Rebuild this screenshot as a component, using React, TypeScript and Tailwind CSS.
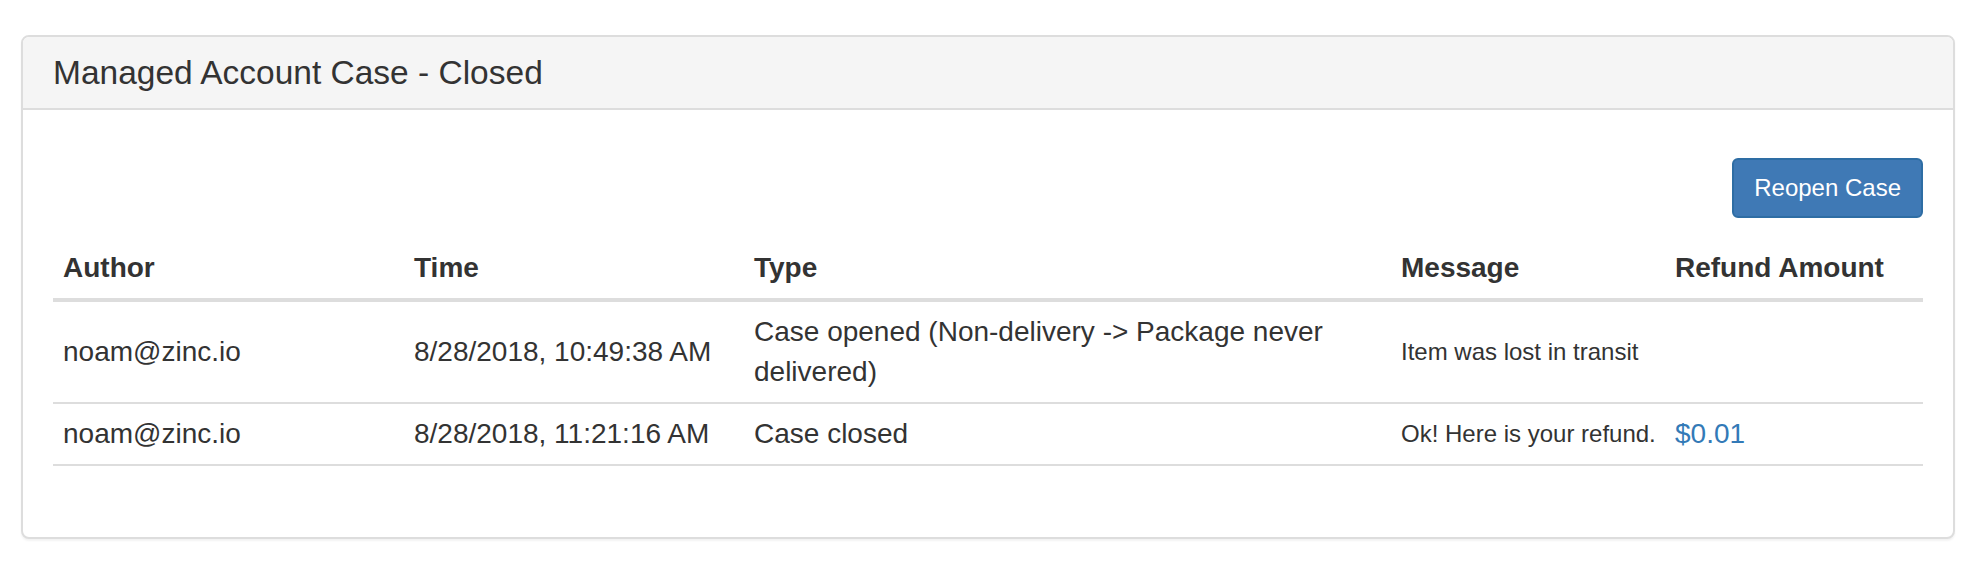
import React from 'react';

type Entry = {
    author: string;
    time: string;
    type: string;
    message: string;
    refund?: string;
};

const entries: Entry[] = [
    {
        author: 'noam@zinc.io',
        time: '8/28/2018, 10:49:38 AM',
        type: 'Case opened (Non-delivery -> Package never delivered)',
        message: 'Item was lost in transit',
    },
    {
        author: 'noam@zinc.io',
        time: '8/28/2018, 11:21:16 AM',
        type: 'Case closed',
        message: 'Ok! Here is your refund.',
        refund: '$0.01',
    },
];

export default function App() {
    return (
        <div className="min-h-screen bg-white pt-[35px] pl-[21px] pr-[21px] text-[#333] font-['Liberation_Sans',Arial,sans-serif]">
            <div className="w-[1934px] rounded-[8px] border-2 border-[#ddd] bg-white shadow-[0_2px_2px_rgba(0,0,0,0.05)]">
                <div className="rounded-t-[6px] border-b-2 border-[#ddd] bg-[#f5f5f5] px-[30px] py-[18px]">
                    <h3 className="text-[33.5px] leading-[35px] font-normal">Managed Account Case - Closed</h3>
                </div>
                <div className="px-[30px] pt-[30px] pb-[30px]">
                    <div className="mt-[18px] flex justify-end">
                        <button className="h-[60px] rounded-[6px] border-2 border-[#2e6da4] bg-[#3f79b5] px-[20px] text-[24px] leading-[36px] text-white">
                            Reopen Case
                        </button>
                    </div>
                    <table className="mt-[20px] mb-[41px] w-full table-fixed border-collapse text-[28px] leading-[40px]">
                        <thead>
                            <tr className="border-b-4 border-[#ddd]">
                                <th className="w-[351px] p-[10px] text-left align-bottom font-bold">Author</th>
                                <th className="w-[340px] p-[10px] text-left align-bottom font-bold">Time</th>
                                <th className="w-[647px] p-[10px] text-left align-bottom font-bold">Type</th>
                                <th className="w-[274px] p-[10px] text-left align-bottom font-bold">Message</th>
                                <th className="p-[10px] text-left align-bottom font-bold">Refund Amount</th>
                            </tr>
                        </thead>
                        <tbody>
                            {entries.map((e, i) => (
                                <tr key={i} className="border-b-2 border-[#ddd]">
                                    <td className="p-[10px] align-middle">{e.author}</td>
                                    <td className="p-[10px] align-middle whitespace-nowrap">{e.time}</td>
                                    <td className="p-[10px] align-middle">{e.type}</td>
                                    <td className="p-[10px] align-middle whitespace-nowrap text-[24px]">{e.message}</td>
                                    <td className="p-[10px] align-middle text-[#337ab7]">{e.refund}</td>
                                </tr>
                            ))}
                        </tbody>
                    </table>
                </div>
            </div>
        </div>
    );
}
